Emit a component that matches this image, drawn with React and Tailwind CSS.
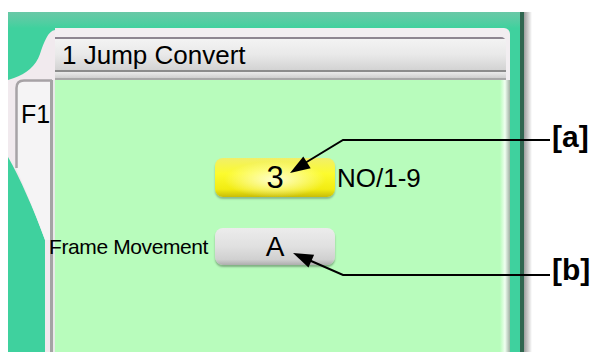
import React from "react";

const LeftTab = () => {
  return (
    <div className="relative w-[47px] h-full">
      {/* folder tab silhouette */}
      <svg
        width="47"
        height="324"
        viewBox="0 0 47 324"
        className="absolute inset-0"
      >
        <path
          d="M47,2 C40,3 36,14 32,26 C28,38 18,46 6,50 L0,52 L0,129 C12,150 26,182 37,212 L37,324 L47,324 Z"
          fill="#f1eaee"
        />
        <path
          d="M9,54 L42,54 L42,212 L37,212 C27,184 16,158 9,142 Z"
          fill="#f5f4f5"
        />
        <path
          d="M8.5,140 L8.5,60 Q8.5,52.5 16,52.5 L44,52.5"
          stroke="#a7a3a6"
          strokeWidth="2.5"
          fill="none"
        />
        <rect x="42" y="52" width="3" height="272" fill="#a4a4a4" />
        <rect x="45" y="52" width="2" height="272" fill="#e9e9e9" />
      </svg>
      <div className="relative pt-[74px] pl-[13px] text-[25px] leading-[25px] text-black">
        F1
      </div>
    </div>
  );
};

const App = () => {
  return (
    <div className="relative w-[595px] h-[352px] overflow-hidden bg-white flex pt-[12px] pl-[8px] font-['Liberation_Sans',Arial,sans-serif]">
      {/* Teal panel */}
      <div className="flex h-[340px]">
        <div className="w-[516px] flex flex-col bg-[#3fd19e] border-r-4 border-[#2f6650]">
          <div className="h-[16px] bg-gradient-to-b from-[#69c8a7] to-[#3fd19e]" />
          <div className="flex flex-1">
            <LeftTab />
            <div className="w-[455px] flex flex-col">
              {/* Header */}
              <div className="h-[52px] bg-[#f2eef1] rounded-tr-[6px] pt-[9px] flex flex-col">
                <div className="w-[451px] flex flex-col rounded-tr-[5px] overflow-hidden">
                  <div className="h-[33px] border-t-2 border-[#8e8691] bg-gradient-to-b from-[#f3f3f3] via-[#e9e9e9] to-[#d3d3d3] pt-[3px] pl-[7px] text-[26px] leading-[26px] text-black whitespace-nowrap">
                    1 Jump Convert
                  </div>
                  <div className="h-[2px] bg-[#8c8c8c]" />
                  <div className="h-[6px] bg-gradient-to-b from-[#ebebeb] to-[#cfcfcf]" />
                  <div className="h-[2px] bg-[#a9a9a9]" />
                </div>
              </div>

              {/* Content */}
              <div className="flex flex-1">
                <div className="flex-1 bg-[#b8fcbc] pt-[78px] grid grid-cols-[160px_120px_1fr] content-start items-center gap-y-[31px] text-black">
                  <div />
                  <div className="h-[39px] rounded-[8px] flex items-center justify-center text-[31px] leading-none bg-[radial-gradient(ellipse_at_50%_55%,rgba(255,255,215,0.95)_0%,rgba(255,255,150,0)_60%),linear-gradient(to_bottom,#f1ef6a,#fcfb2e_40%,#f2ec12_80%,#c8bd08)] shadow-[0_2px_2px_rgba(0,0,0,0.25)]">
                    3
                  </div>
                  <div className="pl-[2px] text-[26px] leading-none whitespace-nowrap">
                    NO/1-9
                  </div>

                  <div className="flex justify-end pr-[7px]">
                    <span className="relative whitespace-nowrap text-[21px] leading-none tracking-[-0.4px]">
                      Frame Movement
                    </span>
                  </div>
                  <div className="h-[37px] rounded-[8px] flex items-center justify-center text-[28px] leading-none bg-[linear-gradient(to_bottom,#ececec,#e0e0e0_50%,#d0d0d0_85%,#aeaeae)] shadow-[0_2px_2px_rgba(0,0,0,0.3)]">
                    A
                  </div>
                  <div />
                </div>
                <div className="w-[10px] bg-gradient-to-r from-[#b8fcbc] via-[#f0fff1] to-[#9fb0a3]" />
              </div>
            </div>
            <div className="w-[10px]" />
          </div>
        </div>
        <div className="w-[8px] bg-gradient-to-r from-[#9e9e9e] to-white" />
      </div>

      {/* Callout labels */}
      <div className="flex flex-col pl-[20px] pt-[110px] text-[30px] leading-[30px] font-bold text-black">
        <div>[a]</div>
        <div className="mt-[103px]">[b]</div>
      </div>

      {/* Callout lines */}
      <svg
        className="absolute inset-0 pointer-events-none"
        width="595"
        height="352"
        viewBox="0 0 595 352"
      >
        <polyline
          points="550,140 343,140 305,163"
          stroke="#000"
          strokeWidth="2"
          fill="none"
        />
        <polygon points="290,173 303.3,156.5 310.7,168.3" fill="#000" />
        <polyline
          points="550,275 343,275 310,260.5"
          stroke="#000"
          strokeWidth="2"
          fill="none"
        />
        <polygon points="293,253 314.1,254.7 308.5,267.5" fill="#000" />
      </svg>
    </div>
  );
};

export default App;
